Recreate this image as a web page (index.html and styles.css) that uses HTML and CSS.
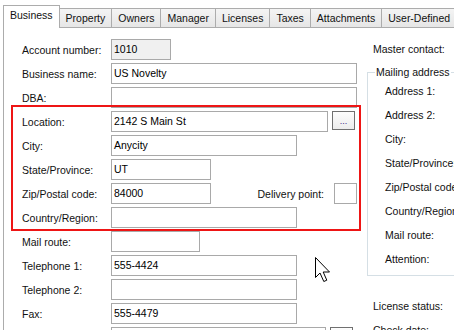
FILE: index.html
```html
<!DOCTYPE html>
<html lang="en">
  <head>
    <meta charset="UTF-8" />
    <title>Business – Property record</title>
    <link rel="stylesheet" href="styles.css">
  </head>
  <body>
    <div class="tabs">
      <div class="tab active">Business</div>
      <div class="tab">Property</div>
      <div class="tab">Owners</div>
      <div class="tab">Manager</div>
      <div class="tab">Licenses</div>
      <div class="tab">Taxes</div>
      <div class="tab">Attachments</div>
      <div class="tab">User-Defined</div>
    </div>

    <div class="panel">
      <div class="main-col">
        <div class="row">
          <span class="label">Account number:</span>
          <span class="field readonly w-acct">1010</span>
        </div>
        <div class="row">
          <span class="label">Business name:</span>
          <span class="field w-full">US Novelty</span>
        </div>
        <div class="row">
          <span class="label">DBA:</span>
          <span class="field w-full"></span>
        </div>
        <div class="row">
          <span class="label">Location:</span>
          <span class="field w-loc">2142 S Main St</span>
          <span class="browse">...</span>
        </div>
        <div class="row">
          <span class="label">City:</span>
          <span class="field w-mid">Anycity</span>
        </div>
        <div class="row">
          <span class="label">State/Province:</span>
          <span class="field w-short">UT</span>
        </div>
        <div class="row">
          <span class="label">Zip/Postal code:</span>
          <span class="field w-short">84000</span>
          <span class="label-inline">Delivery point:</span>
          <span class="field w-tiny"></span>
        </div>
        <div class="row">
          <span class="label">Country/Region:</span>
          <span class="field w-mid"></span>
        </div>
        <div class="row">
          <span class="label">Mail route:</span>
          <span class="field w-route"></span>
        </div>
        <div class="row">
          <span class="label">Telephone 1:</span>
          <span class="field w-mid">555-4424</span>
        </div>
        <div class="row">
          <span class="label">Telephone 2:</span>
          <span class="field w-mid"></span>
        </div>
        <div class="row">
          <span class="label">Fax:</span>
          <span class="field w-mid">555-4479</span>
        </div>
        <div class="row">
          <span class="label"></span>
          <span class="field w-mail"></span>
          <span class="browse"></span>
        </div>
      </div>

      <div class="side-col">
        <div class="side-row">Master contact:</div>
        <fieldset class="group">
          <legend>Mailing address</legend>
          <div class="group-row">Address 1:</div>
          <div class="group-row">Address 2:</div>
          <div class="group-row">City:</div>
          <div class="group-row">State/Province:</div>
          <div class="group-row">Zip/Postal code:</div>
          <div class="group-row">Country/Region:</div>
          <div class="group-row">Mail route:</div>
          <div class="group-row">Attention:</div>
        </fieldset>
        <div class="side-row status">License status:</div>
        <div class="side-row">Check date:</div>
      </div>

      <!-- red highlight drawn over the address fields -->
      <div class="highlight"></div>

      <svg class="cursor" width="16" height="26" viewBox="0 0 16 26">
        <path d="M0.5 0.5 L0.5 20.5 L5 16 L8.8 24.5 L11.8 23.2 L8.2 15 L14.5 15 Z"
              fill="#fff" stroke="#000" stroke-width="1" stroke-linejoin="miter" />
      </svg>
    </div>
  </body>
</html>
```

FILE: styles.css
```css
body {
  margin: 0;
  width: 454px;
  height: 330px;
  overflow: hidden;
  background: #fff;
  font-family: "Liberation Sans", Arial, sans-serif;
  font-size: 10.5px;
  color: #111;
}

/* tab strip */
.tabs {
  display: flex;
  align-items: flex-end;
  height: 27px;
  padding-left: 3px;
  white-space: nowrap;
}
.tab {
  height: 18px;
  line-height: 18px;
  padding: 0 6px;
  border: 1px solid #acacac;
  border-bottom: none;
  margin-left: -1px;
  background: linear-gradient(#f4f4f4, #e6e6e6);
}
.tab.active {
  position: relative;
  z-index: 2;
  margin-left: 0;
  height: 22px;
  line-height: 19px;
  margin-bottom: -1px;
  background: #fff;
}

/* page body */
.panel {
  position: relative;
  display: flex;
  margin-left: 3px;
  height: 291px;
  overflow: hidden;
  padding-top: 11px;
  border-top: 1px solid #acacac;
  border-left: 1px solid #acacac;
}
.main-col {
  flex: none;
  width: 335px;
  padding-left: 18px;
  padding-right: 10px;
}
.row {
  display: flex;
  align-items: center;
  height: 21px;
  margin-bottom: 3px;
  white-space: nowrap;
}
.label {
  flex: none;
  width: 89px;
}
.field {
  flex: none;
  box-sizing: border-box;
  height: 21px;
  line-height: 19px;
  padding: 0 2px;
  border: 1px solid #a9a9a9;
  background: #fff;
  color: #000;
}
.field.readonly {
  background: #f0f0f0;
}
.w-acct { width: 60px; }
.w-full { width: 246px; }
.w-loc { width: 217px; }
.w-mid { width: 186px; }
.w-short { width: 100px; }
.w-route { width: 89px; }
.w-mail { width: 215px; }
.w-tiny { width: 23px; }

.browse {
  flex: none;
  align-self: flex-start;
  box-sizing: border-box;
  width: 23px;
  height: 19px;
  margin-left: 4px;
  border: 1px solid #707070;
  background: linear-gradient(#fdfdfd, #ececec);
  text-align: center;
  line-height: 19px;
  font-size: 9px;
  color: #3a2a8a;
}
.label-inline {
  margin-left: auto;
  margin-right: 10px;
}

/* right column */
.side-col {
  flex: none;
  width: 130px;
  white-space: nowrap;
}
.side-row {
  height: 21px;
  line-height: 21px;
  margin-bottom: 3px;
  padding-left: 6px;
}
.group {
  margin: 6px 0 0 0;
  padding: 2px 0 2px 17px;
  min-width: 0;
  border: 1px solid #d5dfe5;
}
.group legend {
  margin-left: -10px;
  padding: 0 1px;
  line-height: 13px;
}
.group-row {
  height: 21px;
  line-height: 21px;
  margin-bottom: 3px;
}
.side-row.status {
  margin-top: 20px;
}

/* annotation overlay and pointer */
.highlight {
  position: absolute;
  left: 7px;
  top: 77px;
  width: 346px;
  height: 122px;
  border: 2px solid #ee1515;
  pointer-events: none;
}
.cursor {
  position: absolute;
  left: 311px;
  top: 229px;
}
```
